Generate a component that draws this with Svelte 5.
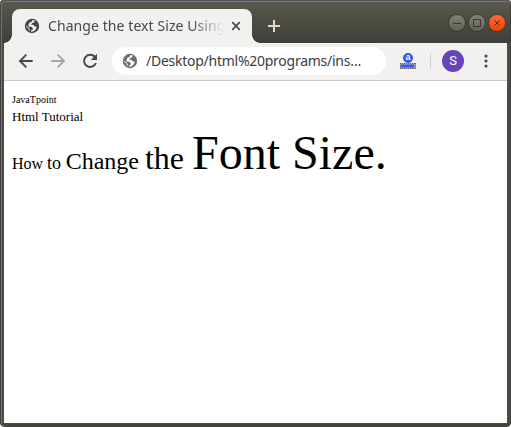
<script>
  const words = [
    ['How ', 16],
    ['to ', 18],
    ['Change ', 24],
    ['the ', 32],
    ['Font Size.', 48]
  ];
</script>

{#snippet globe(color, land)}
  <svg width="16" height="16" viewBox="0 0 16 16">
    <circle cx="8" cy="8" r="7.200" fill={color} />
    <path d="M8.300 2.200H10.700L10.200 4.200L8 5.200L7 6.700H9.300L10.600 8.600H12.600L12.200 10.500L10.500 12.700L8 13.800L7 13.500V12.200H8.500L8.800 10.300L7.500 8.700H5L4.300 7.200L5.400 4.800L7.500 3.900Z" fill={land} />
    <path d="M2.200 8.200L5 10.500L5.300 12.600" fill="none" stroke={land} stroke-width="1" />
  </svg>
{/snippet}

<div class="window">
  <header class="titlebar">
    <div class="tab">
      {@render globe('#484848', '#f2f1f0')}
      <span class="title">Change the text Size Using</span>
      <svg class="close" width="10" height="10" viewBox="0 0 10 10"><path d="M1.200 1.200L8.800 8.800M8.800 1.200L1.200 8.800" stroke="#484848" stroke-width="1.700" /></svg>
    </div>
    <svg class="plus" width="12" height="12" viewBox="0 0 12 12"><path d="M6 0V12M0 6H12" stroke="#dfdbd2" stroke-width="2" /></svg>
    <div class="controls">
      <span class="ctl"><svg viewBox="0 0 16 16"><path d="M4 8.500H12" /></svg></span>
      <span class="ctl"><svg viewBox="0 0 16 16"><rect x="4.500" y="4.500" width="7" height="7" /></svg></span>
      <span class="ctl red"><svg viewBox="0 0 16 16"><path d="M5.200 5.200L10.800 10.800M10.800 5.200L5.200 10.800" /></svg></span>
    </div>
  </header>

  <nav class="toolbar">
    <svg class="nav" width="16" height="16" viewBox="0 0 16 16" fill="none" stroke="#484848" stroke-width="1.900"><path d="M14.700 8H2.500M8.300 1.700L2 8L8.300 14.300" /></svg>
    <svg class="nav" width="16" height="16" viewBox="0 0 16 16" fill="none" stroke="#a6a6a5" stroke-width="1.900"><path d="M1.300 8H13.500M7.700 1.700L14 8L7.700 14.300" /></svg>
    <svg class="nav" width="16" height="16" viewBox="0 0 16 16"><path d="M12.700 3.700A6.100 6.100 0 1 0 13.900 10" fill="none" stroke="#484848" stroke-width="2" /><path d="M15 .8V7H8.800Z" fill="#484848" /></svg>
    <div class="address">
      {@render globe('#6d6d6d', '#fff')}
      <span class="url">/Desktop/html%20programs/ins…</span>
    </div>
    <div class="extension">
      <b>a</b>
      <svg width="16" height="6" viewBox="0 0 16 6"><rect width="16" height="6" fill="#a9a9ad" /><path d="M0 .5H16M0 5.500H16M.5 0V6M15.500 0V6" stroke="#66666c" stroke-dasharray="1 1" /><rect x="1" y="1.500" width="13" height="3" fill="#3f57ec" /></svg>
    </div>
    <i class="divider"></i>
    <span class="avatar">S</span>
    <svg class="menu" width="4" height="14" viewBox="0 0 4 14" fill="#484848"><circle cx="2" cy="2" r="1.600" /><circle cx="2" cy="7" r="1.600" /><circle cx="2" cy="12" r="1.600" /></svg>
  </nav>

  <main>
    <div class="tiny">JavaTpoint</div>
    <div class="small">Html Tutorial</div>
    <div class="line">{#each words as [text, size]}<span style:font-size="{size}px">{text}</span>{/each}</div>
  </main>
</div>

<style>
  :global(body) { margin: 0; background: #fff; }
  .window {
    box-sizing: border-box;
    width: 511px;
    height: 427px;
    display: flex;
    flex-direction: column;
    padding: 0 4px 4px;
    background: linear-gradient(#5a594f, #3f3e38 43px, #4d4b43 44px, #4d4b43 422px, #414039);
    border-radius: 4px 4px 5px 5px;
    overflow: hidden;
    box-shadow: inset 0 1px #55555b, inset 0 2px #77756c, inset 1px 0 #44433d, inset 2px 0 #747168, inset -1px 0 #3e3d37;
    font-family: "Noto Sans", "Open Sans", sans-serif;
  }
  svg { display: block; flex: none; }
  .titlebar { height: 43px; flex: none; display: flex; align-items: flex-start; }
  .tab {
    box-sizing: border-box;
    position: relative;
    width: 240px;
    height: 34px;
    margin: 9px 0 0 8px;
    padding: 0 11px 0 12px;
    display: flex;
    align-items: center;
    background: #f2f1f0;
    border-radius: 8px 8px 0 0;
  }
  .tab::before, .tab::after {
    content: "";
    position: absolute;
    bottom: 0;
    width: 8px;
    height: 8px;
  }
  .tab::before { left: -8px; background: radial-gradient(circle at 0 0, transparent 7.500px, #f2f1f0 8px); }
  .tab::after { right: -8px; background: radial-gradient(circle at 100% 0, transparent 7.500px, #f2f1f0 8px); }
  .title {
    width: 176px;
    margin-left: 8px;
    overflow: hidden;
    white-space: nowrap;
    font-size: 14px;
    line-height: 20px;
    letter-spacing: 0.08px;
    color: #484848;
    -webkit-mask-image: linear-gradient(90deg, #000 143px, transparent 176px);
    mask-image: linear-gradient(90deg, #000 143px, transparent 176px);
  }
  .close { margin-left: auto; }
  .plus { margin: 20px 0 0 16px; }
  .controls { display: flex; gap: 4px; margin: 15px 2px 0 auto; }
  .ctl {
    box-sizing: border-box;
    width: 16px;
    height: 16px;
    border-radius: 50%;
    background: linear-gradient(#83827a, #605f58);
    box-shadow: 0 0 0 1px #393831;
  }
  .ctl svg { width: 16px; height: 16px; fill: none; stroke: #393832; stroke-width: 1; }
  .red { background: linear-gradient(#ff6a3a, #f04400); box-shadow: 0 0 0 1px #50382e; }
  .toolbar {
    box-sizing: border-box;
    height: 38px;
    flex: none;
    display: flex;
    align-items: center;
    padding: 0 19px 1px 14px;
    background: #f2f1f0;
    border-bottom: 1px solid #cbcac9;
  }
  .nav { margin-right: 16px; }
  .address {
    box-sizing: border-box;
    width: 274px;
    height: 28px;
    margin-left: -2px;
    padding-left: 10px;
    display: flex;
    align-items: center;
    border-radius: 14px;
    background: #fff;
  }
  .url { margin-left: 8px; font-size: 14px; line-height: 20px; letter-spacing: -0.26px; white-space: nowrap; color: #3c3c3c; }
  .extension { width: 16px; margin-left: 14px; display: flex; flex-direction: column; align-items: center; }
  .extension b {
    width: 10px;
    height: 10px;
    border-radius: 50%;
    background: #3157e8;
    color: #fff;
    font: bold 9px/9px "Liberation Sans", sans-serif;
    text-align: center;
  }
  .divider { width: 1px; height: 16px; margin-left: 14px; background: #cfcecd; }
  .avatar {
    width: 22px;
    height: 22px;
    margin-left: 11px;
    border-radius: 50%;
    background: #6744bb;
    color: #fff;
    font: 13px/22px Roboto, sans-serif;
    text-align: center;
  }
  .menu { margin-left: auto; }
  main {
    flex: 1;
    padding: 10px 8px 0;
    background: #fff;
    color: #000;
    font-family: "Liberation Serif", serif;
  }
  .tiny { font-size: 10px; line-height: 17px; }
  .small { font-size: 13px; line-height: 17px; }
  .line { line-height: 55px; white-space: pre; }
</style>
